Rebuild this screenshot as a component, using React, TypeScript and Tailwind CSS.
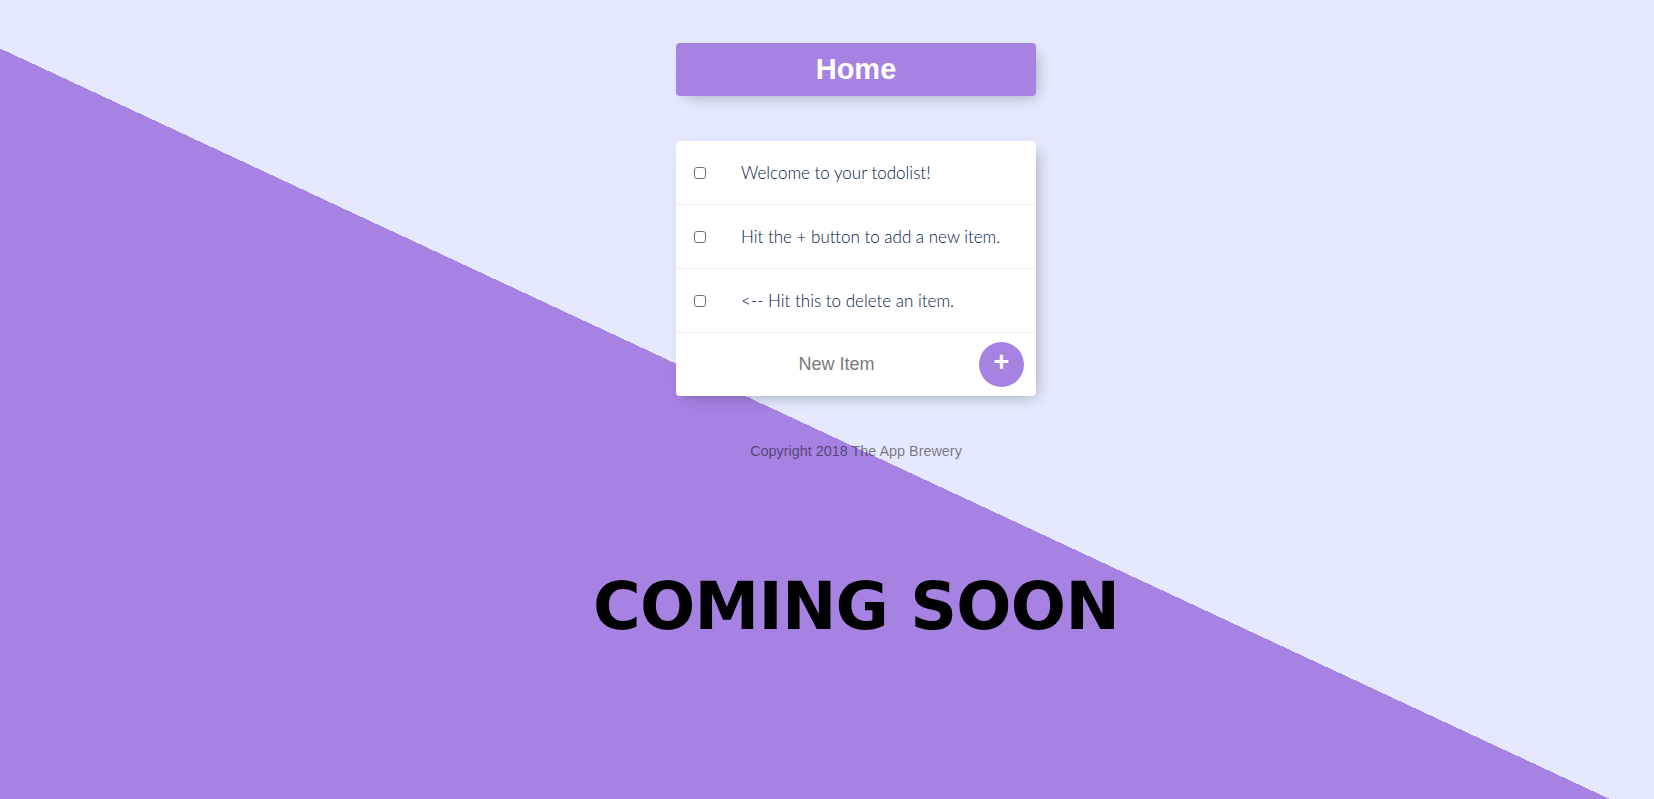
const items = [
  'Welcome to your todolist!',
  'Hit the + button to add a new item.',
  '<-- Hit this to delete an item.',
];

function TodoRow({ text }: { text: string }) {
  return (
    <div className="flex h-[64px] items-center border-b border-[#F1F1F1]">
      <input
        type="checkbox"
        className="ml-[18px] h-[12px] w-[12px] shrink-0 appearance-none rounded-[3px] border border-[#6e6e6e] bg-white"
      />
      <p className="ml-[35px] font-['Lato','Liberation_Sans',sans-serif] text-[17px] font-light text-[#00204a]">{text}</p>
    </div>
  );
}

export default function App() {
  return (
    <div className="h-screen w-full overflow-hidden bg-[#E4E9FD] bg-[linear-gradient(25deg,#A683E3_47.8%,#E4E9FD_47.8%)] font-['Liberation_Sans',sans-serif]">
      <div className="flex flex-col items-center pl-[58px] pt-[43px]">
        <div className="flex h-[53px] w-[360px] items-center justify-center rounded-[4px] bg-[#A683E3] shadow-[5px_5px_15px_-5px_rgba(0,0,0,0.3)]">
          <h1 className="text-[29px] font-bold text-white">Home</h1>
        </div>

        <div className="mt-[45px] w-[360px] rounded-[4px] bg-white shadow-[5px_5px_15px_-5px_rgba(0,0,0,0.3)]">
          {items.map((t) => (
            <TodoRow key={t} text={t} />
          ))}
          <form className="flex h-[63px] items-center" onSubmit={(e) => e.preventDefault()}>
            <input
              type="text"
              placeholder="New Item"
              className="ml-[18px] h-[54px] w-[276px] pl-[9px] text-center text-[18px] text-[#00204a] outline-none placeholder:text-[#7a7a7a]"
            />
            <button
              type="submit"
              className="ml-[9px] flex h-[45px] w-[45px] items-center justify-center rounded-full bg-[#A683E3] pb-[4px] text-[27px] font-bold leading-none text-white"
            >
              +
            </button>
          </form>
        </div>

        <footer className="mt-[45px] text-[14.4px] text-black/50">
          Copyright 2018 The App Brewery
        </footer>

        <h1 className="mt-[111px] font-['DejaVu_Sans',sans-serif] text-[65px] font-bold leading-none tracking-[-0.7px] text-black">
          COMING SOON
        </h1>
      </div>
    </div>
  );
}
